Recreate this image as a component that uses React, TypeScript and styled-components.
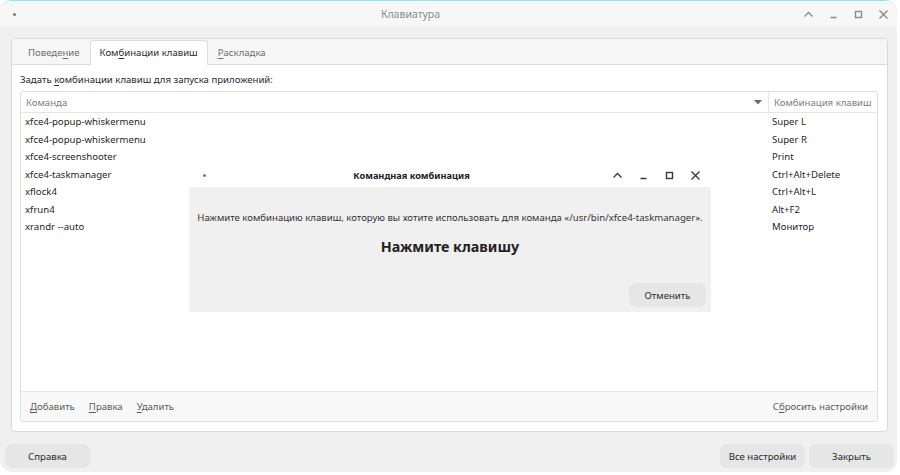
import React from "react";
import styled, { createGlobalStyle } from "styled-components";

const GlobalStyle = createGlobalStyle`
  html, body { margin: 0; padding: 0; background: #ffffff; }
  body { font-family: "Noto Sans", "Open Sans", sans-serif; font-size: 9.6px; color: #2f2f2f; }
  * { box-sizing: border-box; }
`;

const Window = styled.div`
  width: 897px;
  height: 472px;
  border-radius: 12px;
  background: #f0f0f0;
  border-top: 1px solid #8fe8ef;
  overflow: hidden;
  display: flex;
  flex-direction: column;
`;

const TitleBar = styled.div<{ $bg?: string; $h?: number }>`
  height: ${(p) => p.$h ?? 26}px;
  background: ${(p) => p.$bg ?? "#f7f7f7"};
  display: flex;
  align-items: center;
  flex-shrink: 0;
`;

const Dot = styled.span<{ $left: number }>`
  width: 3px;
  height: 3px;
  border-radius: 50%;
  background: #7a7a7a;
  margin-left: ${(p) => p.$left}px;
  flex-shrink: 0;
`;

const Title = styled.div<{ $bold?: boolean }>`
  flex: 1;
  text-align: center;
  font-size: ${(p) => (p.$bold ? 9.2 : 10.5)}px;
  color: ${(p) => (p.$bold ? "#222" : "#8a8a8a")};
  font-weight: ${(p) => (p.$bold ? 700 : 400)};
  padding-left: ${(p) => (p.$bold ? 5 : 2)}px;
`;

const Controls = styled.div<{ $gap: number; $right: number }>`
  display: flex;
  align-items: center;
  gap: ${(p) => p.$gap}px;
  margin-right: ${(p) => p.$right}px;
`;

const Ctl = styled.svg`
  width: 11px;
  height: 11px;
  display: block;
`;

const WinControls: React.FC<{ color: string; gap: number; right: number }> = ({ color, gap, right }) => (
  <Controls $gap={gap} $right={right}>
    <Ctl viewBox="0 0 11 11">
      <path d="M1.5 7.5 L5.5 3.5 L9.5 7.5" fill="none" stroke={color} strokeWidth="1.4" />
    </Ctl>
    <Ctl viewBox="0 0 11 11">
      <path d="M2.5 8.5 H8.5" stroke={color} strokeWidth="1.4" />
    </Ctl>
    <Ctl viewBox="0 0 11 11">
      <rect x="2.5" y="2.5" width="6" height="6" fill="none" stroke={color} strokeWidth="1.4" />
    </Ctl>
    <Ctl viewBox="0 0 11 11">
      <path d="M1.5 1.5 L9.5 9.5 M9.5 1.5 L1.5 9.5" stroke={color} strokeWidth="1.4" />
    </Ctl>
  </Controls>
);

const Body = styled.div`
  flex: 1;
  display: flex;
  flex-direction: column;
  padding: 11px 9px 3px 11px;
`;

const Notebook = styled.div`
  height: 394px;
  border: 1px solid #d9d9d9;
  border-radius: 4px;
  background: #ffffff;
  display: flex;
  flex-direction: column;
  overflow: hidden;
`;

const TabBar = styled.div`
  height: 26px;
  background: #f6f6f6;
  border-bottom: 1px solid #dcdcdc;
  display: flex;
  align-items: flex-end;
  padding-left: 6px;
  flex-shrink: 0;
`;

const Tab = styled.div<{ $active?: boolean }>`
  height: ${(p) => (p.$active ? 25 : 24)}px;
  padding: 0 9px;
  margin-bottom: ${(p) => (p.$active ? -1 : 0)}px;
  display: flex;
  align-items: center;
  padding-bottom: ${(p) => (p.$active ? 1 : 0)}px;
  color: ${(p) => (p.$active ? "#2a2a2a" : "#6f6f6f")};
  background: ${(p) => (p.$active ? "#ffffff" : "transparent")};
  border: 1px solid ${(p) => (p.$active ? "#dcdcdc" : "transparent")};
  border-bottom: none;
  border-radius: 3px 3px 0 0;
`;

const U = styled.span`
  text-decoration: underline;
  text-underline-offset: 2px;
`;

const Page = styled.div`
  flex: 1;
  display: flex;
  flex-direction: column;
  padding: 6px 9px 9px 8px;
`;

const Label = styled.div`
  color: #2a2a2a;
  height: 16px;
  line-height: 17px;
  margin-bottom: 4px;
`;

const Tree = styled.div`
  flex: 1;
  border: 1px solid #dfdfdf;
  border-radius: 3px;
  display: flex;
  flex-direction: column;
  position: relative;
  overflow: hidden;
`;

const Header = styled.div`
  height: 21px;
  display: grid;
  grid-template-columns: 1fr 109px;
  border-bottom: 1px solid #e6e6e6;
  flex-shrink: 0;
`;

const HeadCell = styled.div<{ $sep?: boolean }>`
  display: flex;
  align-items: center;
  justify-content: space-between;
  padding: 0 6px 0 5px;
  color: #7d7d7d;
  white-space: nowrap;
  overflow: hidden;
  border-left: ${(p) => (p.$sep ? "1px solid #e6e6e6" : "none")};
`;

const Rows = styled.div`
  flex: 1;
`;

const Row = styled.div`
  height: 17.5px;
  display: grid;
  grid-template-columns: 1fr 109px;
  align-items: center;
  color: #262626;
`;

const Cell = styled.div<{ $pad: number }>`
  padding-left: ${(p) => p.$pad}px;
  white-space: nowrap;
`;

const Footer = styled.div`
  height: 30px;
  background: #f8f8f8;
  border-top: 1px solid #e9e9e9;
  display: flex;
  align-items: center;
  padding: 0 9px;
  gap: 14px;
  color: #5c5c5c;
  flex-shrink: 0;
`;

const Spacer = styled.div`
  flex: 1;
`;

const Dialog = styled.div`
  position: absolute;
  left: 168px;
  top: 71px;
  width: 522px;
  display: flex;
  flex-direction: column;
  background: #ffffff;
`;

const DialogBody = styled.div`
  background: #f0f0f0;
  height: 125px;
  display: flex;
  flex-direction: column;
  align-items: center;
  padding: 24px 5px 5px 5px;
`;

const Message = styled.div`
  color: #333;
  white-space: nowrap;
`;

const Big = styled.div`
  font-size: 14.3px;
  font-weight: 700;
  color: #222;
  margin-top: 13px;
`;

const DialogActions = styled.div`
  margin-top: auto;
  align-self: stretch;
  display: flex;
  justify-content: flex-end;
`;

const Button = styled.button<{ $w: number }>`
  width: ${(p) => p.$w}px;
  height: 24px;
  border: none;
  border-radius: 7px;
  background: #e6e6e6;
  font-family: inherit;
  font-size: 9.6px;
  color: #2a2a2a;
  padding: 0;
`;

const BottomBar = styled.div`
  margin-top: auto;
  display: flex;
  align-items: center;
  gap: 4px;
  margin-left: -6px;
  margin-right: -6px;
  margin-bottom: 1px;
`;

const commands = [
  ["xfce4-popup-whiskermenu", "Super L"],
  ["xfce4-popup-whiskermenu", "Super R"],
  ["xfce4-screenshooter", "Print"],
  ["xfce4-taskmanager", "Ctrl+Alt+Delete"],
  ["xflock4", "Ctrl+Alt+L"],
  ["xfrun4", "Alt+F2"],
  ["xrandr --auto", "Монитор"],
];

export default function App() {
  return (
    <>
      <GlobalStyle />
      <Window>
        <TitleBar>
          <Dot $left={13} />
          <Title>Клавиатура</Title>
          <WinControls color="#8a8a8a" gap={14} right={8} />
        </TitleBar>
        <Body>
          <Notebook>
            <TabBar>
              <Tab>
                Поведе<U>н</U>ие
              </Tab>
              <Tab $active>
                Ком<U>б</U>инации клавиш
              </Tab>
              <Tab>
                <U>Р</U>аскладка
              </Tab>
            </TabBar>
            <Page>
              <Label>
                Задать <U>к</U>омбинации клавиш для запуска приложений:
              </Label>
              <Tree>
                <Header>
                  <HeadCell>
                    <span>Команда</span>
                    <svg width="8" height="5" viewBox="0 0 8 5">
                      <path d="M0 0 H8 L4 4.5 Z" fill="#6a6a6a" />
                    </svg>
                  </HeadCell>
                  <HeadCell $sep>Комбинация клавиш</HeadCell>
                </Header>
                <Rows>
                  {commands.map(([c, k], i) => (
                    <Row key={i}>
                      <Cell $pad={4}>{c}</Cell>
                      <Cell $pad={4}>{k}</Cell>
                    </Row>
                  ))}
                </Rows>
                <Footer>
                  <span>
                    <U>Д</U>обавить
                  </span>
                  <span>
                    <U>П</U>равка
                  </span>
                  <span>
                    <U>У</U>далить
                  </span>
                  <Spacer />
                  <span>
                    С<U>б</U>росить настройки
                  </span>
                </Footer>
                <Dialog>
                  <TitleBar $bg="#ffffff" $h={24}>
                    <Dot $left={14} />
                    <Title $bold>Командная комбинация</Title>
                    <WinControls color="#3a3a3a" gap={15} right={10} />
                  </TitleBar>
                  <DialogBody>
                    <Message>
                      Нажмите комбинацию клавиш, которую вы хотите использовать для команда «/usr/bin/xfce4-taskmanager».
                    </Message>
                    <Big>Нажмите клавишу</Big>
                    <DialogActions>
                      <Button $w={77}>Отменить</Button>
                    </DialogActions>
                  </DialogBody>
                </Dialog>
              </Tree>
            </Page>
          </Notebook>
          <BottomBar>
            <Button $w={85}>Справка</Button>
            <Spacer />
            <Button $w={85}>Все настройки</Button>
            <Button $w={85}>Закрыть</Button>
          </BottomBar>
        </Body>
      </Window>
    </>
  );
}
